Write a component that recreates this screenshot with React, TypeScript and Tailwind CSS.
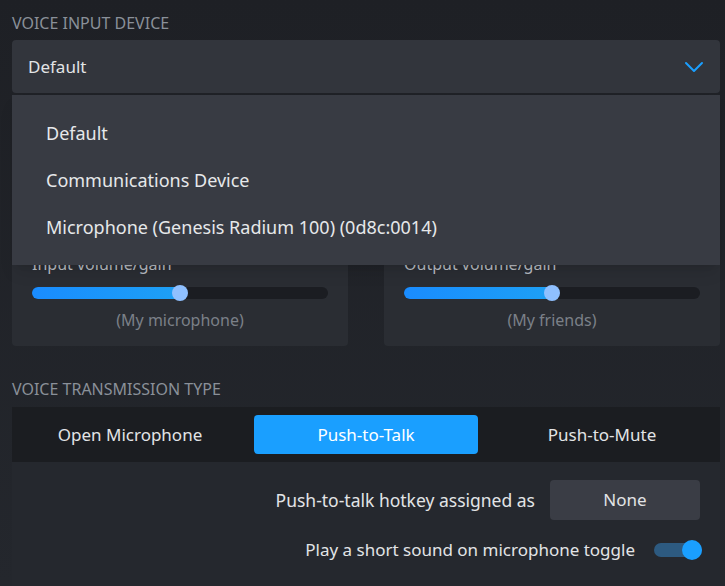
import { ChevronDown } from 'lucide-react'

function Slider({ value }: { value: number }) {
  return (
    <div className="relative h-[12px] rounded-full bg-[#1b1d22]">
      <div
        className="h-full rounded-full bg-gradient-to-r from-[#1a8cff] to-[#1ea0f5]"
        style={{ width: `${value}%` }}
      />
      <div
        className="absolute top-1/2 h-[16px] w-[16px] -translate-x-1/2 -translate-y-1/2 rounded-full bg-[#8fc0ff]"
        style={{ left: `${value}%` }}
      />
    </div>
  )
}

function VolumePanel({ label, value, caption }: { label: string; value: number; caption: string }) {
  return (
    <div className="flex h-[241px] flex-col justify-end rounded-sm bg-[#2a2d33] px-5 pb-[16px]">
      <div className="text-[16px] leading-[20px] text-[#b8bcc2]">{label}</div>
      <div className="mt-[13px]">
        <Slider value={value} />
      </div>
      <div className="mt-[11px] text-center text-[16px] leading-[20px] text-[#7b8088]">{caption}</div>
    </div>
  )
}

export default function App() {
  const devices = ['Default', 'Communications Device', 'Microphone (Genesis Radium 100) (0d8c:0014)']
  const modes = ['Open Microphone', 'Push-to-Talk', 'Push-to-Mute']

  return (
    <div
      className="h-[586px] w-[725px] overflow-hidden bg-gradient-to-b from-[#1e2025] to-[#24272d] pl-3 pr-[5px] pt-[13px]"
      style={{ fontFamily: '"Noto Sans", "Liberation Sans", sans-serif' }}
    >
      <div className="text-[16px] uppercase leading-[20px] text-[#8a9099]">Voice Input Device</div>

      <div className="relative mt-[7px]">
        <div className="flex h-[53px] items-center justify-between rounded-sm bg-[#32353c] pl-4 pr-[10px]">
          <span className="text-[17px] text-[#e2e4e6]">Default</span>
          <ChevronDown size={32} strokeWidth={1.5} className="text-[#1a9fff]" />
        </div>

        {/* open device menu */}
        <div className="absolute left-0 right-0 top-[55px] z-10 flex h-[170px] flex-col justify-center gap-[19px] bg-[#383b43] pl-[34px] shadow-lg">
          {devices.map(d => (
            <div key={d} className="text-[18px] leading-[28px] text-[#e6e8ea]">{d}</div>
          ))}
        </div>

        <div className="mt-[12px] grid grid-cols-2 gap-[36px]">
          <VolumePanel label="Input volume/gain" value={50} caption="(My microphone)" />
          <VolumePanel label="Output volume/gain" value={50} caption="(My friends)" />
        </div>
      </div>

      <div className="mt-[33px] text-[16px] uppercase leading-[20px] text-[#8a9099]">Voice Transmission Type</div>

      <div className="mt-[8px] h-[200px] bg-[#25282e]">
        <div className="grid h-[55px] grid-cols-3 bg-[#1b1d21]">
          {modes.map(m => (
            <div
              key={m}
              className={
                m === 'Push-to-Talk'
                  ? 'mx-[6px] my-2 flex items-center justify-center rounded-sm bg-[#1a9fff] text-[17px] text-white'
                  : 'flex items-center justify-center text-[17px] text-[#e2e4e6]'
              }
            >
              {m}
            </div>
          ))}
        </div>

        <div className="flex flex-col items-end pr-5 pt-[18px]">
          <div className="flex items-center gap-[15px]">
            <span className="text-[17.5px] text-[#e2e4e6]">Push-to-talk hotkey assigned as</span>
            <div className="flex h-[40px] w-[150px] items-center justify-center rounded-sm bg-[#3a3d45] text-[17px] text-[#e2e4e6]">
              None
            </div>
          </div>
          <div className="-mr-[2px] mt-[17px] flex items-center gap-[19px]">
            <span className="text-[17px] text-[#e2e4e6]">Play a short sound on microphone toggle</span>
            <div className="relative flex h-[20px] w-[48px] items-center">
              <div className="h-[14px] w-full rounded-full bg-[#2d5a80]" />
              <div className="absolute right-0 h-[20px] w-[20px] rounded-full bg-[#1a9fff]" />
            </div>
          </div>
        </div>
      </div>
    </div>
  )
}
